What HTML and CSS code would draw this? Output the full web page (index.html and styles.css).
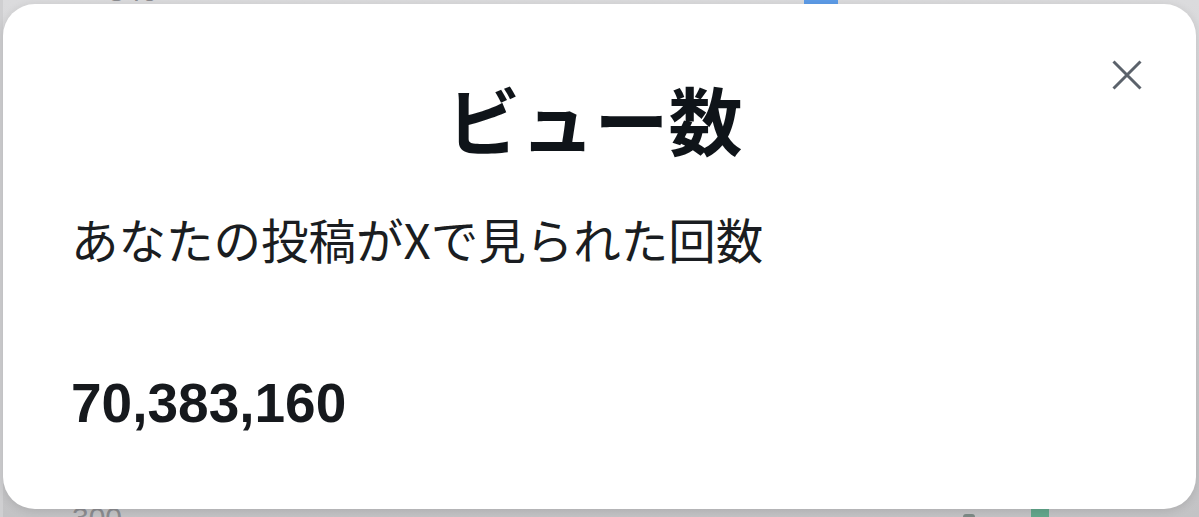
FILE: index.html
```html
<!doctype html>
<html lang="ja">
<head>
  <meta charset="utf-8">
  <title>ビュー数</title>
  <link rel="stylesheet" href="styles.css">
</head>
<body>
<div class="page">
  <div class="axis axis-top">
    <span class="tick">840</span>
    <span class="bar bar-blue"></span>
  </div>
  <div class="axis axis-bottom">
    <span class="tick">300</span>
    <span class="bar bar-dark"></span>
    <span class="bar bar-green"></span>
  </div>
</div>

<div class="modal" role="dialog" aria-labelledby="modalTitle">
  <button class="close" aria-label="閉じる">
    <svg viewBox="0 0 30 30" width="30" height="30">
      <path d="M1.5 1.5 L28.5 28.5 M28.5 1.5 L1.5 28.5" />
    </svg>
  </button>
  <h1 id="modalTitle" class="title">ビュー数</h1>
  <p class="desc">あなたの投稿がXで見られた回数</p>
  <p class="count">70,383,160</p>
</div>
</body>
</html>
```

FILE: styles.css
```css
html, body {
  margin: 0;
  height: 100%;
}

body {
  font-family: "Noto Sans CJK JP", "Noto Sans", sans-serif;
  color: #0f1419;
  overflow: hidden;
}

/* chart page behind the dialog */
.page {
  height: 517px;
  display: flex;
  flex-direction: column;
  justify-content: space-between;
  background: linear-gradient(#dbdbdd, #c3c3c5);
  border-left: 3px solid #cfcfd1;
  box-sizing: border-box;
}

.axis {
  display: flex;
  height: 20px;
}
.axis-top {
  align-items: flex-start;
}
.axis-bottom {
  align-items: flex-end;
}

.tick {
  font-family: "Liberation Sans", sans-serif;
  font-size: 30px;
  line-height: 30px;
  color: #8c8c90;
}
.axis-top .tick {
  margin-left: 105px;
  margin-top: -24px;
}
.axis-bottom .tick {
  margin-left: 69px;
  margin-bottom: -16px;
}

.bar {
  display: block;
}
.bar-blue {
  margin-left: auto;
  margin-right: 361px;
  width: 34px;
  height: 12px;
  background: #5d9ce8;
}
.bar-dark {
  margin-left: auto;
  width: 12px;
  height: 3px;
  border-radius: 3px 3px 0 0;
  background: #7d8a86;
}
.bar-green {
  margin-left: 56px;
  margin-right: 150px;
  width: 18px;
  height: 14px;
  background: #63a78c;
}

/* dialog */
.modal {
  position: absolute;
  left: 3px;
  top: 4px;
  width: 1193px;
  height: 505px;
  box-sizing: border-box;
  padding: 70px 68px 0;
  background: #fff;
  border-radius: 32px;
  box-shadow: 0 2px 10px rgba(0, 0, 0, .12);
}

.close {
  position: absolute;
  top: 47px;
  right: 45px;
  width: 48px;
  height: 48px;
  padding: 0;
  border: 0;
  background: none;
  display: flex;
  align-items: center;
  justify-content: center;
}
.close svg {
  fill: none;
  stroke: #5b626b;
  stroke-width: 3;
  stroke-linecap: butt;
}

.title {
  margin: 0;
  padding-right: 10px;
  text-align: center;
  font-size: 74px;
  line-height: 88px;
  font-weight: 700;
}

.desc {
  margin: 46px 0 0;
  font-size: 47.5px;
  line-height: 61px;
  font-weight: 400;
  color: #1a1d21;
}

.count {
  margin: 101px 0 0;
  font-family: "Liberation Sans", "Noto Sans", sans-serif;
  font-size: 55px;
  line-height: 66px;
  font-weight: 700;
  color: #16191d;
}
```
